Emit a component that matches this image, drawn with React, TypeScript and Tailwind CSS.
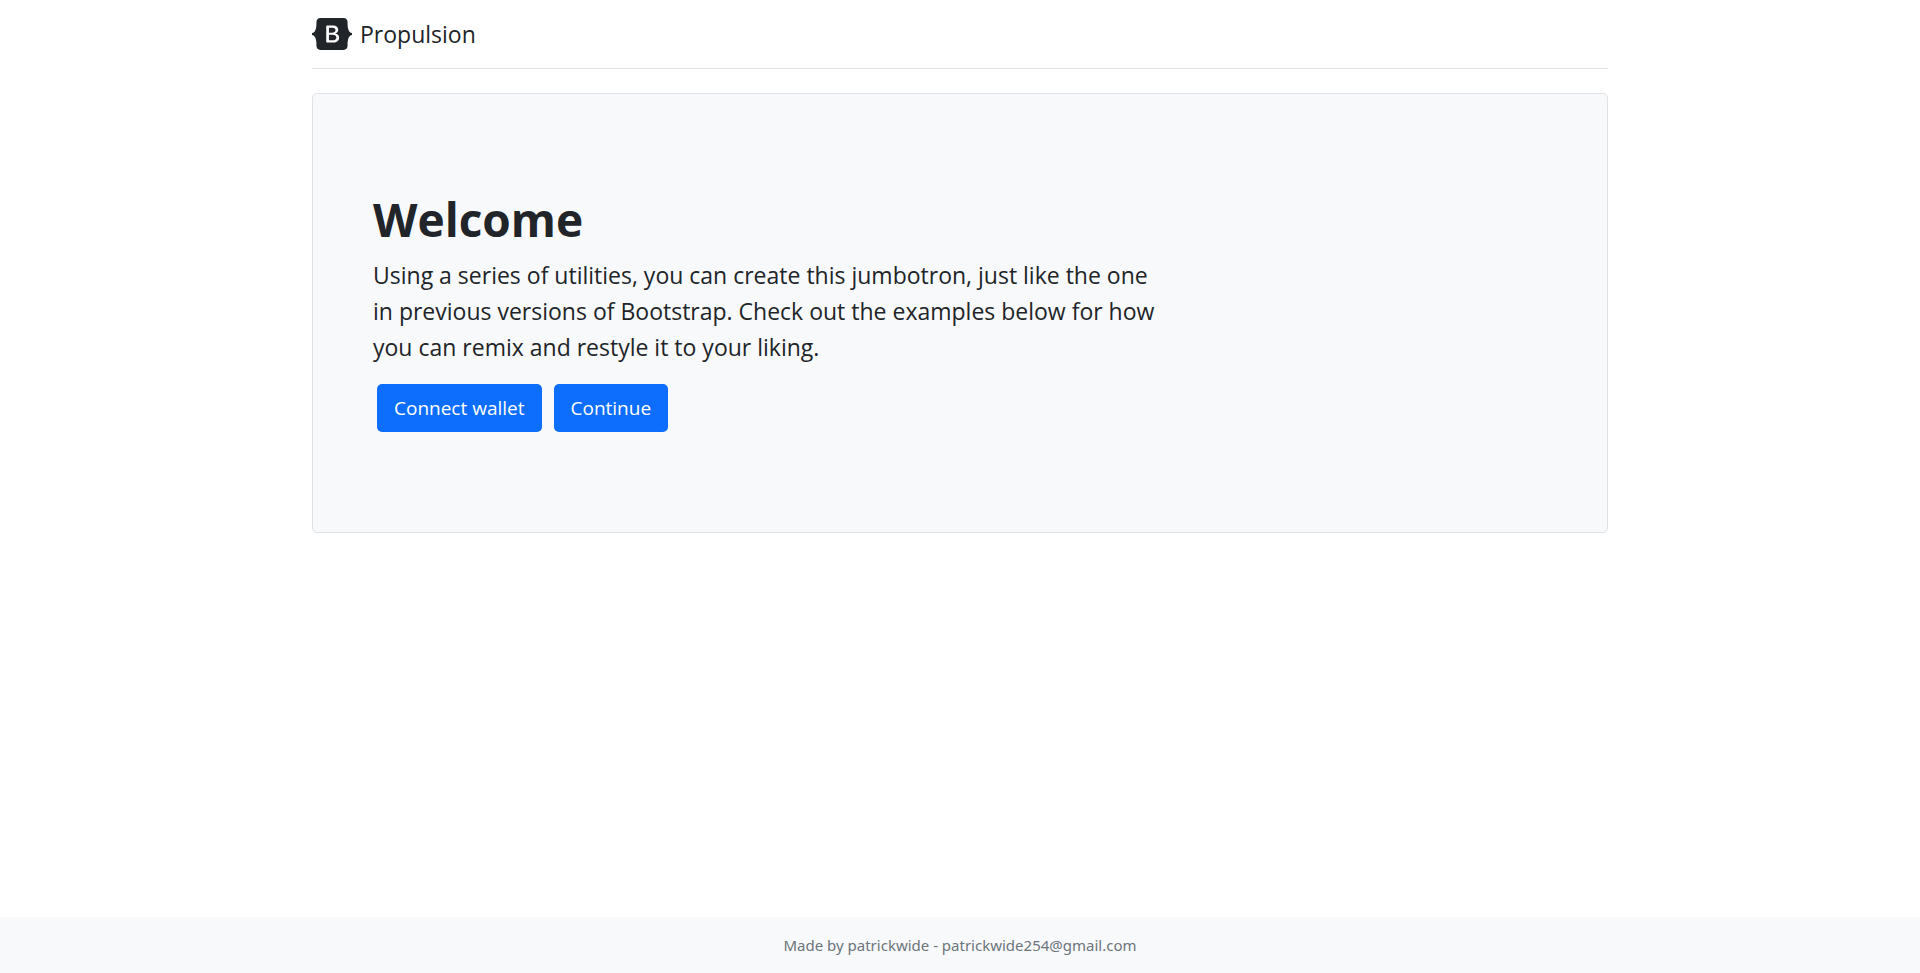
function Logo() {
  return (
    <svg width="40" height="32" viewBox="0 0 118 94" fill="currentColor" aria-hidden="true" className="shrink-0">
      <path
        fillRule="evenodd"
        clipRule="evenodd"
        d="M24.509 0c-6.733 0-11.715 5.893-11.492 12.284.214 6.14-.064 14.092-2.066 20.577C8.943 39.365 5.547 43.485 0 44.014v5.972c5.547.529 8.943 4.649 10.951 11.153 2.002 6.485 2.28 14.437 2.066 20.577C12.794 88.106 17.776 94 24.51 94H93.5c6.733 0 11.714-5.893 11.491-12.284-.214-6.14.064-14.092 2.066-20.577 2.009-6.504 5.396-10.624 10.943-11.153v-5.972c-5.547-.529-8.934-4.649-10.943-11.153-2.002-6.484-2.28-14.437-2.066-20.577C105.214 5.894 100.233 0 93.5 0H24.508zM80 57.863C80 66.663 73.436 72 62.543 72H44a2 2 0 01-2-2V24a2 2 0 012-2h18.437c9.083 0 15.044 4.92 15.044 12.474 0 5.302-4.01 10.049-9.119 10.88v.277C75.317 46.394 80 51.21 80 57.863zM60.521 28.34H49.948v14.934h8.905c6.884 0 10.68-2.772 10.68-7.727 0-4.643-3.264-7.207-9.012-7.207zM49.948 49.2v16.458H60.91c7.167 0 10.964-2.876 10.964-8.281 0-5.406-3.903-8.178-11.425-8.178H49.948z"
      />
    </svg>
  );
}

function ActionButton({ label }: { label: string }) {
  return (
    <button
      type="button"
      className="rounded-[5px] bg-[#0d6efd] px-[17px] py-2 text-[19px] leading-8 text-white hover:bg-[#0b5ed7]"
    >
      {label}
    </button>
  );
}

export default function App() {
  return (
    <div className="flex min-h-screen flex-col bg-white font-['Open_Sans','Noto_Sans',sans-serif] text-[#212529]">
      <main className="mx-auto w-full max-w-[1320px] px-3 pt-4">
        <header className="mb-6 border-b border-[#dee2e6] pb-4">
          <a href="#" className="flex items-center gap-2 text-[23px] leading-9">
            <Logo />
            <span>Propulsion</span>
          </a>
        </header>

        <section className="rounded-[5px] border border-[#dee2e6] bg-[#f8f9fa] px-[60px] py-24">
          <h1 className="mb-2 text-[46px] leading-[59px] font-bold">Welcome</h1>
          <p className="mb-[19px] max-w-[800px] text-[23px] leading-9">
            Using a series of utilities, you can create this jumbotron, just like the one in previous versions of
            Bootstrap. Check out the examples below for how you can remix and restyle it to your liking.
          </p>
          <div className="mx-1 mb-1 flex flex-wrap gap-3">
            <ActionButton label="Connect wallet" />
            <ActionButton label="Continue" />
          </div>
        </section>
      </main>

      <footer className="mt-auto bg-[#f8f9fa] px-3 py-4 text-center font-['Noto_Sans',sans-serif] text-[15px] leading-6 text-[#6c757d]">
        Made by patrickwide - patrickwide254@gmail.com
      </footer>
    </div>
  );
}
